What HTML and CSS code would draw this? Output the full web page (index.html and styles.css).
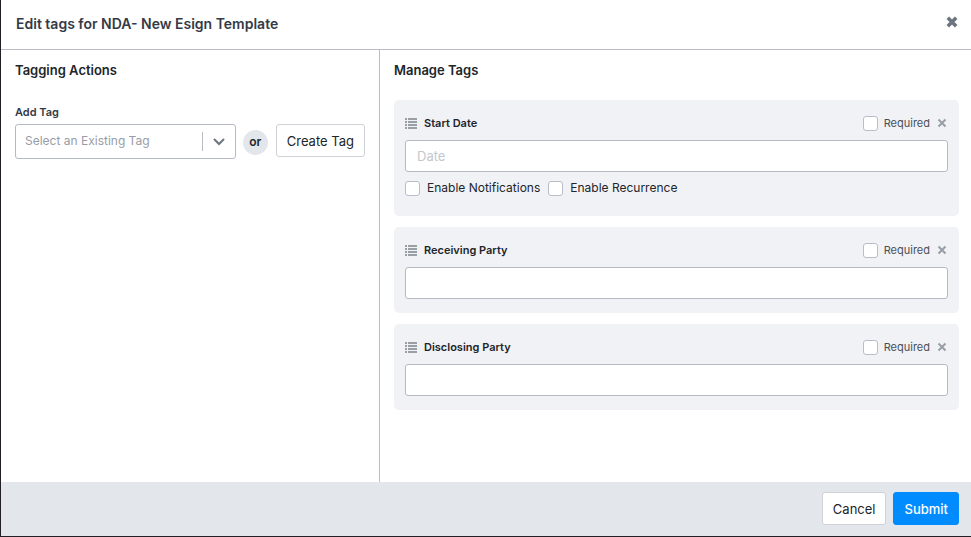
FILE: index.html
```html
<!DOCTYPE html>
<html lang="en">

<head>
    <meta charset="utf-8">
    <meta name="viewport" content="width=device-width, initial-scale=1">
    <title>Edit tags</title>
    <link rel="stylesheet" href="styles.css">
</head>

<body>
    <!-- shared icons -->
    <svg class="sprite" aria-hidden="true">
        <symbol id="icon-list" viewBox="0 0 12 11">
            <path d="M0 0h2v2H0zM3 0h9v2H3zM0 3h2v2H0zM3 3h9v2H3zM0 6h2v2H0zM3 6h9v2H3zM0 9h2v2H0zM3 9h9v2H3z" />
        </symbol>
        <symbol id="icon-x" viewBox="0 0 10 10">
            <path d="M1.5 1.5l7 7M8.5 1.5l-7 7" />
        </symbol>
    </svg>

    <form class="modal">
        <header class="modal-header">
            <h1 class="modal-title">Edit tags for NDA- New Esign Template</h1>
            <button type="button" class="close" aria-label="Close">
                <svg class="close-icon"><use href="#icon-x" /></svg>
            </button>
        </header>

        <main class="modal-body">
            <section class="actions">
                <h2 class="panel-title">Tagging Actions</h2>
                <label class="field-label" for="existing-tag">Add Tag</label>
                <div class="action-row">
                    <div class="select">
                        <select id="existing-tag" class="select-input">
                            <option>Select an Existing Tag</option>
                        </select>
                        <span class="select-arrow">
                            <svg class="arrow-icon" viewBox="0 0 12 8"><path d="M1.5 1.5L6 6l4.500-4.500" /></svg>
                        </span>
                    </div>
                    <span class="or">or</span>
                    <button type="button" class="btn">Create Tag</button>
                </div>
            </section>

            <section class="tags">
                <h2 class="panel-title">Manage Tags</h2>

                <div class="tag">
                    <div class="tag-header">
                        <svg class="list-icon"><use href="#icon-list" /></svg>
                        <label class="tag-name" for="start-date">Start Date</label>
                        <label class="required"><input type="checkbox" class="check">Required</label>
                        <button type="button" class="remove" aria-label="Remove Start Date">
                            <svg class="remove-icon"><use href="#icon-x" /></svg>
                        </button>
                    </div>
                    <input type="text" id="start-date" class="text-input" placeholder="Date">
                    <div class="options">
                        <label class="option"><input type="checkbox" class="check">Enable Notifications</label>
                        <label class="option"><input type="checkbox" class="check">Enable Recurrence</label>
                    </div>
                </div>

                <div class="tag">
                    <div class="tag-header">
                        <svg class="list-icon"><use href="#icon-list" /></svg>
                        <label class="tag-name" for="receiving-party">Receiving Party</label>
                        <label class="required"><input type="checkbox" class="check">Required</label>
                        <button type="button" class="remove" aria-label="Remove Receiving Party">
                            <svg class="remove-icon"><use href="#icon-x" /></svg>
                        </button>
                    </div>
                    <input type="text" id="receiving-party" class="text-input">
                </div>

                <div class="tag">
                    <div class="tag-header">
                        <svg class="list-icon"><use href="#icon-list" /></svg>
                        <label class="tag-name" for="disclosing-party">Disclosing Party</label>
                        <label class="required"><input type="checkbox" class="check">Required</label>
                        <button type="button" class="remove" aria-label="Remove Disclosing Party">
                            <svg class="remove-icon"><use href="#icon-x" /></svg>
                        </button>
                    </div>
                    <input type="text" id="disclosing-party" class="text-input">
                </div>
            </section>
        </main>

        <footer class="modal-footer">
            <button type="button" class="btn">Cancel</button>
            <button type="submit" class="btn btn-primary">Submit</button>
        </footer>
    </form>
</body>

</html>
```
FILE: styles.css
```css
* {
    box-sizing: border-box;
}

body {
    margin: 0;
    font-family: Inter, "Liberation Sans", sans-serif;
    font-size: 13px;
    line-height: 16px;
    color: #212529;
    background: #fff;
}

button,
input,
select {
    font: inherit;
    color: inherit;
}

button {
    cursor: pointer;
}

.sprite {
    display: none;
}

.modal {
    display: flex;
    flex-direction: column;
    min-height: 100vh;
    border-left: 1px solid #231f26;
    border-bottom: 1px solid #231f26;
}

.modal-header {
    display: flex;
    justify-content: space-between;
    align-items: center;
    padding: 14px 13px 15px 15px;
    border-bottom: 1px solid #b9bdc3;
}

.modal-title {
    margin: 0;
    font-size: 14px;
    font-weight: 600;
    line-height: 20px;
    color: #343a46;
}

.close,
.remove {
    display: flex;
    padding: 0;
    border: 0;
    background: none;
    fill: none;
}

.close {
    stroke: #6c757d;
    stroke-width: 3;
}

.close-icon {
    width: 12px;
    height: 12px;
    margin-bottom: 4px;
}

.modal-body {
    display: flex;
    flex: 1;
}

.actions {
    flex: 0 0 379px;
    padding: 12px 14px;
    border-right: 1px solid #b9bdc3;
}

.tags {
    flex: 1;
    padding: 12px 12px 12px 14px;
}

.panel-title {
    margin: 0 0 22px;
    font-size: 13px;
    font-weight: 600;
    line-height: 16px;
}

.field-label {
    display: block;
    margin: 26px 0 4px;
    font-size: 11px;
    font-weight: 600;
    line-height: 16px;
    color: #343a46;
}

.action-row {
    display: flex;
    align-items: flex-start;
}

.select {
    position: relative;
    flex: 1;
}

.select-input {
    display: block;
    width: 100%;
    height: 35px;
    padding: 0 40px 2px 9px;
    border: 1px solid #b5bac6;
    border-radius: 3px;
    background: #fff;
    font-size: 12px;
    color: #989da5;
    appearance: none;
}

/* sits over the native select */
.select-arrow {
    position: absolute;
    top: 8px;
    right: 0;
    display: flex;
    align-items: center;
    justify-content: center;
    width: 34px;
    height: 19px;
    border-left: 1px solid #b9bdc3;
    pointer-events: none;
}

.arrow-icon {
    width: 12px;
    height: 8px;
    fill: none;
    stroke: #6c757d;
    stroke-width: 2;
    stroke-linecap: round;
}

.or {
    width: 25px;
    height: 25px;
    margin: 6px 8px 0 7px;
    border-radius: 50%;
    background: #e3e6ea;
    font-size: 12px;
    font-weight: 600;
    line-height: 24px;
    text-align: center;
}

.btn {
    height: 33px;
    padding: 0 10px;
    border: 1px solid #cfd2d6;
    border-radius: 3px;
    background: #fff;
    white-space: nowrap;
}

.btn-primary {
    border-color: #008cff;
    background: #008cff;
    color: #fff;
    font-weight: 500;
}

.tag {
    margin-bottom: 11px;
    padding: 15px 11px 14px;
    border-radius: 5px;
    background: #f1f2f6;
}

.tag-header {
    display: flex;
    align-items: center;
    margin-bottom: 9px;
}

.list-icon {
    width: 12px;
    height: 11px;
    margin-right: 7px;
    fill: #9a9ea5;
}

.tag-name {
    flex: 1;
    font-size: 11px;
    font-weight: 600;
}

.required,
.option {
    display: flex;
    align-items: center;
    gap: 7px;
}

.required {
    gap: 6px;
    font-size: 11px;
    color: #495057;
}

.check {
    width: 15px;
    height: 15px;
    margin: 0;
    border: 1px solid #b9bdc8;
    border-radius: 3px;
    background: #fff;
    appearance: none;
}

.check:checked {
    background: #008cff;
}

.remove {
    margin: 0 1px 0 7px;
    stroke: #989da6;
    stroke-width: 2;
}

.remove-icon {
    width: 10px;
    height: 10px;
}

.text-input {
    display: block;
    width: 100%;
    height: 32px;
    padding: 0 11px;
    border: 1px solid #b5bac3;
    border-radius: 3px;
    background: #fff;
}

.text-input::placeholder {
    color: #c3c8ce;
}

.options {
    display: flex;
    gap: 8px;
    padding: 8px 0 6px;
    font-size: 12px;
}

.modal-footer {
    display: flex;
    justify-content: flex-end;
    gap: 7px;
    padding: 10px 12px 11px;
    background: #e3e6ea;
}
```
